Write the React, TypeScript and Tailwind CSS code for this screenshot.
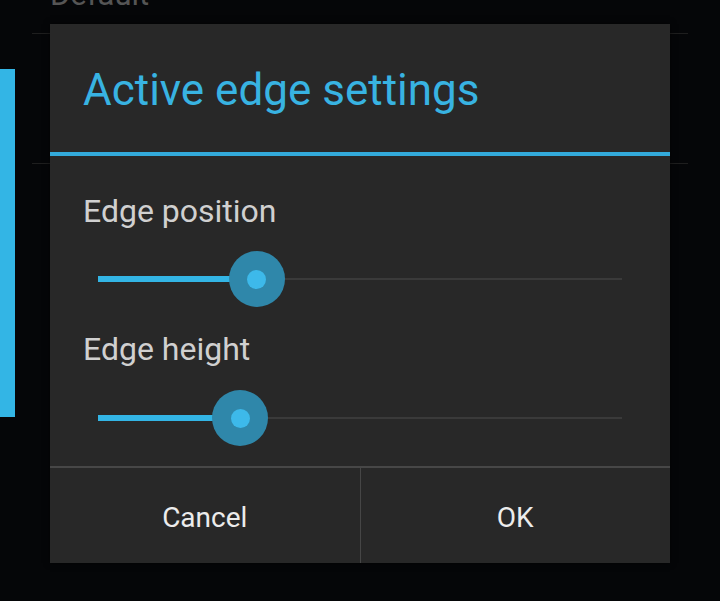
import React from "react";

function Slider({ pct }: { pct: number }) {
  return (
    <div className="relative mx-[48px] h-[56px]">
      <div className="absolute left-0 right-0 top-[27px] h-[2px] bg-[#3a3a3a]" />
      <div
        className="absolute left-0 top-[25px] h-[6px] bg-[#33b5e5]"
        style={{ width: `${pct}%` }}
      />
      <div
        className="absolute top-0 h-[56px] w-[56px] -translate-x-1/2 rounded-full bg-[#2f87aa] flex items-center justify-center"
        style={{ left: `${pct}%` }}
      >
        <div className="h-[19px] w-[19px] rounded-full bg-[#3db9ea]" />
      </div>
    </div>
  );
}

export default function App() {
  return (
    <div
      className="relative w-[720px] h-[601px] overflow-hidden bg-[#050608]"
      style={{ fontFamily: "Roboto, 'Noto Sans', sans-serif" }}
    >
      {/* background settings list */}
      <div className="flex h-full">
        <div className="w-[15px] shrink-0 pt-[69px]">
          <div className="h-[348px] bg-[#33b5e5]" />
        </div>
        <div className="flex-1 ml-[17px] mr-[32px] flex flex-col">
          <div className="mt-[-23px] pl-[18px] text-[31px] leading-[36px] text-[#555555]">
            Default
          </div>
          <div className="mt-[20px] h-[1px] bg-[#1e1e1e]" />
          <div className="mt-[129px] h-[1px] bg-[#1e1e1e]" />
        </div>
      </div>

      {/* dialog */}
      <div className="absolute left-[50px] top-[24px] w-[620px] h-[539px] bg-[#282828] flex flex-col shadow-[0_0_6px_rgba(0,0,0,0.6)]">
        <div className="h-[128px] pt-[40px] pl-[33px]">
          <div className="text-[44px] leading-[52px] text-[#38b3e2]">
            Active edge settings
          </div>
        </div>
        <div className="h-[4px] bg-[#33aadb]" />
        <div className="flex flex-col h-[310px] pt-[37px]">
          <div className="pl-[33px] text-[32px] leading-[36px] text-[#d0d0d0]">
            Edge position
          </div>
          <div className="mt-[22px]">
            <Slider pct={30.3} />
          </div>
          <div className="mt-[24px] pl-[33px] text-[32px] leading-[36px] text-[#d0d0d0]">
            Edge height
          </div>
          <div className="mt-[23px]">
            <Slider pct={27.1} />
          </div>
        </div>
        <div className="h-[2px] bg-[#474747]" />
        <div className="flex flex-1">
          <div className="flex-1 flex items-center justify-center pt-[4px] text-[28px] leading-[28px] text-[#ececec]">
            Cancel
          </div>
          <div className="w-[1px] bg-[#464646]" />
          <div className="flex-1 flex items-center justify-center pt-[4px] text-[28px] leading-[28px] text-[#ececec]">
            OK
          </div>
        </div>
      </div>
    </div>
  );
}
